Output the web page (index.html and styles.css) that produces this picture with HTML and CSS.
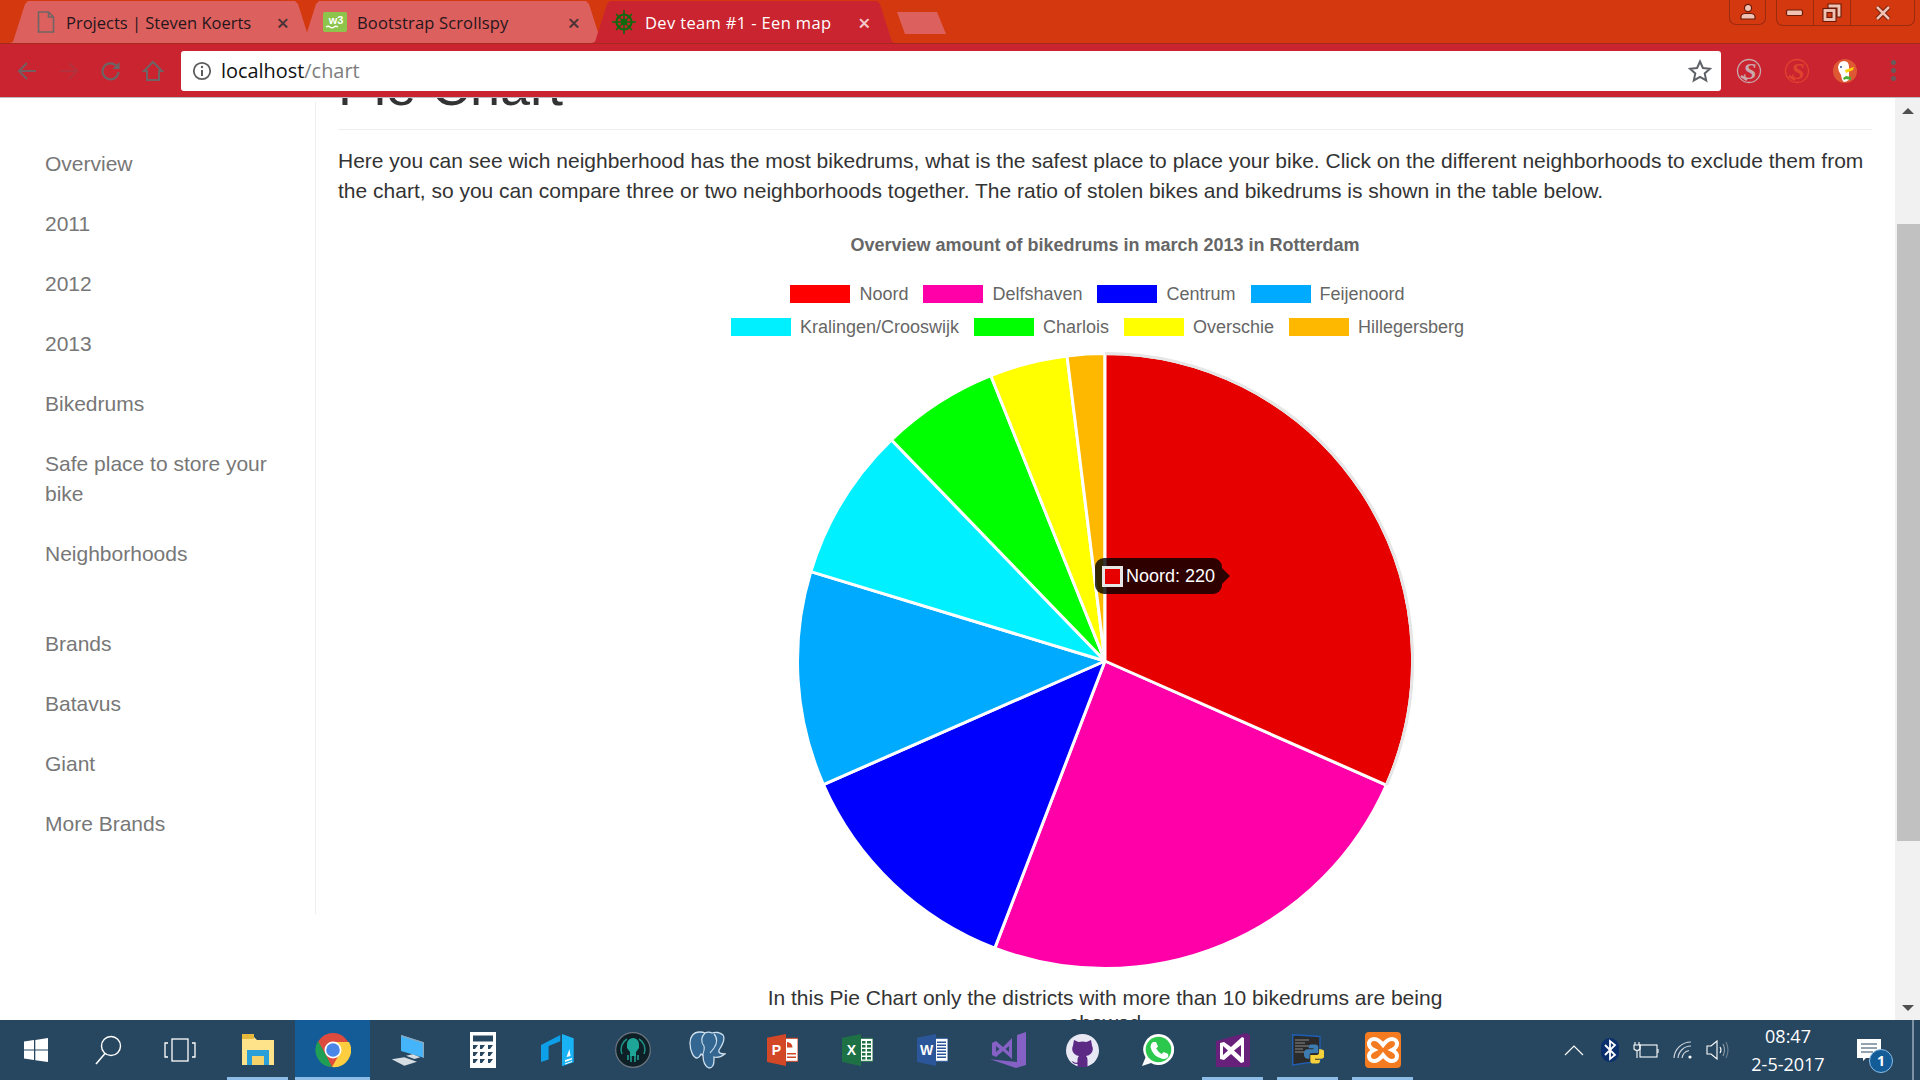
FILE: index.html
```html
<!DOCTYPE html>
<html lang="en">
<head>
<meta charset="utf-8">
<title>Dev team #1 - Een map</title>
<link rel="stylesheet" href="styles.css">
</head>
<body>
<header class="titlebar">
  <div class="tabstrip">
    <div class="tab tab-off tab-first">
      <svg class="tab-icon tab-icon-doc" viewBox="0 0 20 22"><path d="M2.500 1h10l5 5v15h-15zM12.500 1v5h5" fill="none" stroke="#6f6466" stroke-width="1.600"/></svg>
      <span class="tab-title">Projects | Steven Koerts</span>
      <span class="tab-close">×</span>
    </div>
    <div class="tab tab-off tab-second">
      <svg class="tab-icon tab-icon-w3" viewBox="0 0 24 20"><rect width="24" height="20" rx="2" fill="#8cc44c"/><text x="13" y="12" class="w3-text">w3</text><path d="M3 15q2-1.500 4 0t4 0 4 0" fill="none" stroke="#fff" stroke-width="1.300"/></svg>
      <span class="tab-title">Bootstrap Scrollspy</span>
      <span class="tab-close">×</span>
    </div>
    <div class="tab tab-on">
      <svg class="tab-icon tab-icon-wheel" viewBox="0 0 24 24"><g fill="none" stroke="#0d6a0d"><circle cx="12" cy="12" r="7.500" stroke-width="2.200"/><circle cx="12" cy="12" r="2.500" stroke-width="1.400"/><path d="M12 0v24M0 12h24M4 4l16 16M20 4L4 20" stroke-width="1.500"/></g></svg>
      <span class="tab-title">Dev team #1 - Een map</span>
      <span class="tab-close">×</span>
    </div>
    <div class="newtab"></div>
  </div>
  <div class="winctl">
    <div class="winbtn winbtn-user">
      <svg viewBox="0 0 20 18" width="20" height="18"><g fill="#f0c2b4" stroke="#6b1a08" stroke-width="1.200"><circle cx="10" cy="5" r="3.600"/><path d="M3 16v-2.500q0-2.500 4-3h6q4 .5 4 3V16z"/></g></svg>
    </div>
    <div class="wingroup">
      <div class="winbtn winbtn-min"><svg viewBox="0 0 20 10" width="20" height="10"><rect x="1.500" y="2" width="16" height="5.500" rx="1.500" fill="#f0c2b4" stroke="#6b1a08" stroke-width="1.200"/></svg></div>
      <div class="winbtn winbtn-max"><svg viewBox="0 0 20 20" width="20" height="20"><g fill="#f0c2b4" stroke="#6b1a08" stroke-width="1.100"><path d="M6 1h13v13h-4V5H6z"/><rect x="1" y="5.500" width="13" height="13"/><rect x="5" y="9.500" width="5" height="5" fill="#d4380f"/></g></svg></div>
      <div class="winbtn winbtn-close"><svg viewBox="0 0 18 16" width="18" height="16"><path d="M3 2l12 12M15 2L3 14" stroke="#6b1a08" stroke-width="4.500" fill="none"/><path d="M3 2l12 12M15 2L3 14" stroke="#f0c2b4" stroke-width="2.500" fill="none"/></svg></div>
    </div>
  </div>
</header>

<nav class="toolbar">
  <div class="navbtn"><svg viewBox="0 0 22 22" width="22" height="22"><path d="M20 11H3M11 3l-8 8 8 8" fill="none" stroke="#735f62" stroke-width="2"/></svg></div>
  <div class="navbtn"><svg viewBox="0 0 22 22" width="22" height="22"><path d="M2 11h17M11 3l8 8-8 8" fill="none" stroke="#ac3641" stroke-width="1.600"/></svg></div>
  <div class="navbtn"><svg viewBox="0 0 22 22" width="22" height="22"><path d="M18.500 12a8 8 0 1 1-2.500-6.500" fill="none" stroke="#6e6466" stroke-width="2.200"/><path d="M19.500 2v7h-7z" fill="#6e6466"/></svg></div>
  <div class="navbtn"><svg viewBox="0 0 22 22" width="22" height="22"><path d="M11 2L2 11h3v9h12v-9h3z" fill="none" stroke="#6e6466" stroke-width="2"/></svg></div>
  <div class="omnibox">
    <svg class="info" viewBox="0 0 20 20" width="20" height="20"><circle cx="10" cy="10" r="8.200" fill="none" stroke="#5c5c5c" stroke-width="1.800"/><path d="M10 9v6" stroke="#5c5c5c" stroke-width="2"/><circle cx="10" cy="6" r="1.200" fill="#5c5c5c"/></svg>
    <span class="url"><span class="url-host">localhost</span><span class="url-path">/chart</span></span>
    <svg class="star" viewBox="0 0 24 24" width="24" height="24"><path d="M12 2.500l2.900 6.500 7.100.7-5.300 4.700 1.500 7-6.200-3.600-6.200 3.600 1.500-7L2 9.700l7.100-.7z" fill="none" stroke="#5f6368" stroke-width="2"/></svg>
  </div>
  <div class="extensions">
    <div class="ext"><svg viewBox="0 0 26 26" width="26" height="26"><circle cx="13" cy="13" r="11.500" fill="none" stroke="#c9a8ac" stroke-width="1.300"/><text x="14" y="21" class="ext-s ext-s-grey">S</text><path d="M5 18l6 4" stroke="#c9a8ac" stroke-width="2.500"/></svg></div>
    <div class="ext"><svg viewBox="0 0 26 26" width="26" height="26"><circle cx="13" cy="13" r="11.500" fill="none" stroke="#e0442e" stroke-width="1.300"/><text x="14" y="21" class="ext-s ext-s-red">S</text><path d="M5 18l6 4" stroke="#e0442e" stroke-width="2.500"/></svg></div>
    <div class="ext"><svg viewBox="0 0 26 26" width="26" height="26"><circle cx="13" cy="13" r="12" fill="#de5833"/><path d="M6 9q1-6 6-6 5 0 5 6v13q-3 2-5 2-2-1-3-7-3-4-3-8z" fill="#fff"/><circle cx="9" cy="9" r="1" fill="#2d4f8e"/><path d="M13 12l9-3-1 3-7 3z" fill="#fdd20a"/><path d="M11 20l3-2 5 1v3l-5-1-2 1z" fill="#4caf35"/></svg></div>
    <div class="ext ext-menu"><i></i><i></i><i></i></div>
  </div>
</nav>

<div class="viewport">
  <div class="page">
    <aside class="sidebar">
      <ul class="side-list">
        <li><a>Overview</a></li>
        <li><a>2011</a></li>
        <li><a>2012</a></li>
        <li><a>2013</a></li>
        <li><a>Bikedrums</a></li>
        <li><a>Safe place to store your bike</a></li>
        <li><a>Neighborhoods</a></li>
      </ul>
      <ul class="side-list side-second">
        <li><a>Brands</a></li>
        <li><a>Batavus</a></li>
        <li><a>Giant</a></li>
        <li><a>More Brands</a></li>
      </ul>
    </aside>
    <main class="content">
      <h1 class="page-title">Pie Chart</h1>
      <p class="intro">Here you can see wich neighberhood has the most bikedrums, what is the safest place to place your bike. Click on the different neighborhoods to exclude them from the chart, so you can compare three or two neighborhoods together. The ratio of stolen bikes and bikedrums is shown in the table below.</p>
      <div class="chart">
        <div class="chart-title">Overview amount of bikedrums in march 2013 in Rotterdam</div>
        <div class="legend">
          <div class="legend-row">
            <span class="lg"><i class="sw sw-noord"></i>Noord</span>
            <span class="lg"><i class="sw sw-delfs"></i>Delfshaven</span>
            <span class="lg"><i class="sw sw-centrum"></i>Centrum</span>
            <span class="lg"><i class="sw sw-feij"></i>Feijenoord</span>
          </div>
          <div class="legend-row">
            <span class="lg"><i class="sw sw-kral"></i>Kralingen/Crooswijk</span>
            <span class="lg"><i class="sw sw-charl"></i>Charlois</span>
            <span class="lg"><i class="sw sw-over"></i>Overschie</span>
            <span class="lg"><i class="sw sw-hill"></i>Hillegersberg</span>
          </div>
        </div>
        <div class="pie-wrap">
          <svg class="pie" viewBox="0 0 620 620" width="620" height="620">
            <g stroke="#fff" stroke-width="3" stroke-linejoin="round">
              <path fill="#ff00a8" d="M310 310L591.400 434.100A307.500 307.500 0 0 1 199.800 597.100Z"/>
              <path fill="#0000ff" d="M310 310L199.800 597.100A307.500 307.500 0 0 1 28.400 433.600Z"/>
              <path fill="#00aaff" d="M310 310L28.400 433.600A307.500 307.500 0 0 1 15.800 220.600Z"/>
              <path fill="#00f0ff" d="M310 310L15.800 220.600A307.500 307.500 0 0 1 96.400 88.800Z"/>
              <path fill="#00ff00" d="M310 310L96.400 88.800A307.500 307.500 0 0 1 195.800 24.500Z"/>
              <path fill="#ffff00" d="M310 310L195.800 24.500A307.500 307.500 0 0 1 272 4.900Z"/>
              <path fill="#ffb800" d="M310 310L272 4.900A307.500 307.500 0 0 1 310 2.500Z"/>
              <path fill="#e60000" d="M310 310L310 2.500A307.500 307.500 0 0 1 591.400 434.100Z"/>
            </g>
            <path d="M310 2.500A307.500 307.500 0 0 1 591.400 434.100" fill="none" stroke="#e6e6e6" stroke-width="3"/>
          </svg>
          <div class="tooltip"><i class="tip-swatch"></i><span>Noord: 220</span></div>
        </div>
        <p class="chart-note">In this Pie Chart only the districts with more than 10 bikedrums are being showed</p>
      </div>
    </main>
  </div>
  <div class="scrollbar">
    <div class="sb-arrow"><i class="tri-up"></i></div>
    <div class="sb-track"><div class="sb-thumb"></div></div>
    <div class="sb-arrow"><i class="tri-down"></i></div>
  </div>
</div>

<footer class="taskbar">
  <div class="sys-btn"><svg viewBox="0 0 26 26" width="26" height="26"><path fill="#fff" d="M1 4.500l10-1.400v9.300H1zM12.300 2.900L25 1v11.400H12.300zM1 13.600h10V23L1 21.600zM12.300 13.600H25V25l-12.700-1.800z"/></svg></div>
  <div class="sys-btn"><svg viewBox="0 0 28 32" width="28" height="32"><circle cx="17" cy="12" r="9.500" fill="none" stroke="#fff" stroke-width="1.400"/><path d="M11 19.500L2 30" stroke="#fff" stroke-width="1.600"/></svg></div>
  <div class="sys-btn"><svg viewBox="0 0 32 24" width="32" height="24"><g fill="none" stroke="#fff" stroke-width="1.300"><rect x="8" y="1" width="16" height="22"/><path d="M4 5H1v14h3M28 5h3v14h-3"/></g></svg></div>
  <div class="apps">
    <div class="app app-open"><svg viewBox="0 0 34 36" width="34" height="36"><path fill="#ffe38a" d="M1 5h12l3 3h17v25H1z"/><path fill="#e6b93d" d="M1 2h12v5H1z"/><path fill="#2a9fd8" d="M6 33V18h22v15h-5v-9H11v9z"/><rect x="11" y="24" width="12" height="9" fill="#f5d36a"/></svg></div>
    <div class="app app-active">
      <svg viewBox="0 0 36 36" width="36" height="36"><circle cx="18" cy="18" r="17" fill="#dd4b3e"/><path fill="#ffcd40" d="M18 10h16a17 17 0 0 1-17 25l8-14z"/><path fill="#1f9e56" d="M3 9l8 14 6 12A17 17 0 0 1 3 9z"/><circle cx="18" cy="18" r="8.500" fill="#fff"/><circle cx="18" cy="18" r="6.800" fill="#4a86e8"/></svg>
    </div>
    <div class="app"><svg viewBox="0 0 33 31" width="33" height="31"><path fill="#45b5fb" d="M10 0l22.700 7.300v15.400L10 16z"/><path fill="none" stroke="#8fa6b8" stroke-width="1.200" d="M10 .6l22.400 7.200v15"/><path fill="#d5dde3" d="M.7 24.300l12.600-2L26 26.700l-12.700 4zM15 20.700l6.700-1.400 7.600 3-6 1.700z"/></svg></div>
    <div class="app"><svg viewBox="0 0 26 36" width="26" height="36"><rect width="26" height="36" fill="#fff"/><rect x="3" y="3.500" width="20" height="6" fill="#27465f"/><path fill="#27465f" d="M3 13h5l-3 4H3zM10 13h5l-3 4h-2zM18 13h5l-3 4h-2zM3 20h5l-3 4H3zM10 20h5l-3 4h-2zM18 20h5l-3 4h-2zM3 27h5l-3 4H3zM10 27h5l-3 4h-2zM18 27h5l-3 4h-2z"/></svg></div>
    <div class="app"><svg viewBox="0 0 33 33" width="33" height="33"><path fill="#0d9fe8" d="M0 11L19.300 1v6.300L7.600 12v13.500L0 28z"/><path fill="#18b2f5" d="M21 0l11.700 4.300v24L21 32.300z"/><path fill="#fff" d="M28.500 15l1 7-4 1zM24 26l7-2v1.500l-7 2.500zM24 29.500l7-2.500v1l-7 2.500z"/></svg></div>
    <div class="app"><svg viewBox="0 0 36 36" width="36" height="36"><circle cx="18" cy="18" r="17.300" fill="#0e1f26" stroke="#6a7580" stroke-width="1.200"/><path fill="none" stroke="#1e8f86" stroke-width="1.500" d="M7 22A12 12 0 0 1 12 7M29 22A12 12 0 0 0 24 7"/><path fill="#1fa598" d="M12 12a6 6 0 0 1 12 0v4l-3 4v4h-6v-4l-3-4z"/><path stroke="#1fa598" stroke-width="1.500" d="M13 28v-5M16 30v-6M20 30v-6M23 28v-5"/></svg></div>
    <div class="app"><svg viewBox="-1 -1 37 39" width="37" height="39"><path fill="#336791" stroke="#cfe0ee" stroke-width="1.300" d="M10 0C3 0 0 5 0 11c0 9 4 15 7 15 2 0 3-2 4-4l2 1c0 5 1 11 6 13 4 0 5-3 5-8v-3c3 1 7 0 11-3-4 0-7-1-6-4 4-6 6-12 4-15-3-3-8-3-11-2-2-1-5-1-7 0-2-1-4-1-5-1z"/><path fill="none" stroke="#cfe0ee" stroke-width="1.100" d="M15 1c-4 4-4 9-1 13 1 4-1 8-2 10M24 2c4 4 3 10 0 14l-4 5"/></svg></div>
    <div class="app"><svg viewBox="0 0 31 32" width="31" height="32"><rect x="18" y="4.300" width="13" height="23" fill="#fff" stroke="#d24726"/><path fill="#d24726" d="M20 8v5.500h5.500A5.500 5.500 0 0 0 20 8zM20 19h9v1.500h-9zM20 22.500h9V24h-9z"/><path fill="#d24726" d="M0 3.700L19 0v32L0 28z"/><text x="9.500" y="21" class="office-letter">P</text></svg></div>
    <div class="app"><svg viewBox="0 0 31 32" width="31" height="32"><rect x="18" y="4.300" width="13" height="23" fill="#fff" stroke="#1e7145"/><path fill="#1e7145" d="M20 7h3.500v2.500H20zM25 7h4v2.500h-4zM20 11h3.500v2.500H20zM25 11h4v2.500h-4zM20 15h3.500v2.500H20zM25 15h4v2.500h-4zM20 19h3.500v2.500H20zM25 19h4v2.500h-4zM20 23h3.500v2.500H20zM25 23h4v2.500h-4z"/><path fill="#1e7145" d="M0 3.700L19 0v32L0 28z"/><text x="9.500" y="21" class="office-letter">X</text></svg></div>
    <div class="app"><svg viewBox="0 0 31 32" width="31" height="32"><rect x="18" y="4.300" width="13" height="23" fill="#fff" stroke="#2b579a"/><path fill="#2b579a" d="M20 7.500h9V9h-9zM20 10.500h9V12h-9zM20 13.500h9V15h-9zM20 16.500h9V18h-9zM20 19.500h9V21h-9zM20 22.500h9V24h-9z"/><path fill="#2b579a" d="M0 3.700L19 0v32L0 28z"/><text x="9.500" y="21" class="office-letter">W</text></svg></div>
    <div class="app"><svg viewBox="0 0 36 36" width="36" height="36"><path fill="#8661c5" d="M27 3l9-3v33l-10 3L0 27.300 27 30z"/><path fill="#8661c5" fill-rule="evenodd" d="M2 11l4-2 7 6 9-9v21l-9-8-7 6-4-2zM6 14v6l3.500-3zM15.500 17l3.500 3v-6z"/></svg></div>
    <div class="app"><svg viewBox="0 0 33 33" width="33" height="33"><circle cx="16.500" cy="16.500" r="16.500" fill="#e9e9f5"/><path fill="#5c2a85" d="M8 6l4.500 2q4-1 8 0L25 6l1 5.500q2 4.500-1 8-2 2-5 2.500 1.500 1 1.500 3.500V33h-10v-3q-4 .5-6-3l2.500 1q1 1 3.500.5V25.500q0-2.500 1.500-3.500-3-.5-5-2.500-3-3.500-1-8z"/></svg></div>
    <div class="app"><svg viewBox="0 0 32 32" width="32" height="32"><path fill="#fff" d="M16.500 0a15.500 15.500 0 0 0-13 23.500L0 32l9-3A15.500 15.500 0 1 0 16.500 0z"/><circle cx="16.500" cy="15.500" r="12.800" fill="#2cc84d"/><path fill="#fff" d="M11 8l3 0 2 4.500-1.800 2q1.800 3.500 5.500 5.500l2-2 4.500 2v3q-2 2.500-5.500 2Q10.500 22.500 8.500 13q0-3.500 2.500-5z"/></svg></div>
    <div class="app app-open"><svg viewBox="0 0 34 34" width="34" height="34"><path fill="#68217a" d="M0 8L30 0l4 2v32H0z"/><path fill="#fff" fill-rule="evenodd" d="M4 10l4-1 7 5 11-10 2 1v24l-3 1-10-9-7 6-4-1zM7 13v9l5-4.500zM18 17.500l7 6.500V12z"/></svg></div>
    <div class="app app-open"><svg viewBox="0 0 32 32" width="32" height="32"><path fill="#2b2b2b" stroke="#1e5fb4" stroke-width="1.400" d="M.7.700L28 2.500V27L.7 31z"/><path stroke="#8a8a8a" d="M3 6h14M3 9h10M3 12h16M3 15h8M3 18h10"/><g transform="translate(22.300 20) scale(.8 .95)"><path fill="#3c7cb0" d="M-4-10h5q4 0 4 3v6h-8q-3 0-3 3v3h-2q-5 0-5-5t5-5h7v-1h-6v-2q0-2 3-2z"/><path fill="#f6d13c" transform="rotate(180)" d="M-4-10h5q4 0 4 3v6h-8q-3 0-3 3v3h-2q-5 0-5-5t5-5h7v-1h-6v-2q0-2 3-2z"/></g></svg></div>
    <div class="app app-open"><svg viewBox="0 0 36 36" width="36" height="36"><rect width="36" height="36" rx="4" fill="#f47b20"/><path fill="none" stroke="#fff" stroke-width="4" d="M18 13C15 9 12 7 9 7 5 7 4 10 4 12c0 3 3 5 5 6-2 1-5 3-5 6 0 3 2 5 5 5 3 0 6-2 9-6 3 4 6 6 9 6 3 0 5-2 5-5 0-3-3-5-5-6 2-1 5-3 5-6 0-2-1-5-5-5-3 0-6 2-9 6z"/></svg></div>
  </div>
  <div class="tray">
    <svg class="tray-chevron" viewBox="0 0 20 12" width="20" height="12"><path d="M1 11l9-9 9 9" fill="none" stroke="#fff" stroke-width="1.200"/></svg>
    <svg class="tray-bt" viewBox="0 0 18 24" width="18" height="24"><rect width="18" height="24" rx="9" fill="#0a2f6d"/><path d="M4 7l10 10-5 4V3l5 4L4 17" fill="none" stroke="#fff" stroke-width="1.800"/></svg>
    <svg class="tray-batt" viewBox="0 0 26 18" width="26" height="18"><g fill="none" stroke="#fff" stroke-width="1.100"><rect x="7" y="4" width="17" height="12"/><path d="M1 4h6v4q-3 3-6 0zM2 1v3M6 1v3M4 10v7"/><path d="M25 8v4"/></g></svg>
    <svg class="tray-wifi" viewBox="0 0 20 18" width="20" height="18"><g fill="none" stroke="#cdd6dd" stroke-width="1.200"><path d="M1 17A17 17 0 0 1 18 1"/><path d="M5 17A13 13 0 0 1 18 5"/><path d="M9 17A9 9 0 0 1 16 9.500"/></g><circle cx="17" cy="16" r="1.600" fill="#fff"/></svg>
    <svg class="tray-vol" viewBox="0 0 24 20" width="24" height="20"><g fill="none" stroke="#fff" stroke-width="1.100"><path d="M1 6h4l6-5v18l-6-5H1z"/><path d="M14 7q2 3 0 6"/><path d="M17 4q3 6 0 12" stroke="#8fa0ad"/><path d="M20 2q4 8 0 16" stroke="#6f8493"/></g></svg>
    <div class="clock"><span>08:47</span><span>2-5-2017</span></div>
    <div class="notify">
      <svg viewBox="0 0 26 22" width="26" height="22"><path fill="#fff" d="M0 0h24v19H9l-3 3v-3H0z"/><path stroke="#27465f" d="M4 5h16M4 9h16M4 13h12"/></svg>
      <span class="notify-badge">1</span>
    </div>
    <div class="desktop-edge"></div>
  </div>
</footer>
</body>
</html>
```

FILE: styles.css
```css
* { box-sizing: border-box; }
html, body { margin: 0; padding: 0; height: 100%; }
body {
  width: 1920px;
  height: 1080px;
  display: flex;
  flex-direction: column;
  overflow: hidden;
  font-family: "Liberation Sans", Arial, sans-serif;
  background: #fff;
}

/* ---------- browser title bar ---------- */
.titlebar {
  height: 43px;
  flex: none;
  display: flex;
  background: #d4380f;
  font-family: "Open Sans", "Noto Sans", sans-serif;
}
.tabstrip { display: flex; align-items: flex-end; padding-left: 10px; flex: 1; }
.tab {
  width: 303px;
  height: 42px;
  margin-right: -12px;
  padding: 0 24px 0 24px;
  display: flex;
  align-items: center;
  gap: 10px;
  font-size: 16.500px;
  clip-path: polygon(0 100%, 3px 97%, 15px 3px, 18px 0, 285px 0, 288px 3px, 300px 97%, 303px 100%);
}
.tab-first { padding-left: 26px; }
.tab-second .tab-title { letter-spacing: .15px; }
.tab-off { background: #dc605d; color: #26161c; }
.tab-on { background: #ca2430; color: #fff; position: relative; letter-spacing: .35px; }
.tab-icon { flex: none; }
.tab-icon-doc { width: 20px; height: 22px; }
.tab-icon-w3 { width: 24px; height: 20px; margin-left: -2px; }
.tab-icon-wheel { width: 24px; height: 24px; margin: 0 -1px 0 -4px; }
.tab-title { flex: 1; white-space: nowrap; }
.tab-close { font-size: 22px; line-height: 1; font-weight: 600; }
.tab-off .tab-close { color: #4a3236; }
.tab-on .tab-close { color: #f3c9c9; }
.w3-text { font: bold 11px "Liberation Sans", sans-serif; fill: #fff; text-anchor: middle; }
.newtab {
  width: 49px;
  height: 22px;
  margin: 0 0 9px 14px;
  background: #dc605d;
  clip-path: polygon(0 0, 40px 0, 49px 100%, 8px 100%);
}
.winctl { display: flex; align-items: flex-start; gap: 10px; padding-right: 5px; }
.winbtn { display: flex; align-items: center; justify-content: center; height: 25px; }
.winbtn-user { width: 37px; border: 1px solid #9a2a10; border-top: 0; border-radius: 0 0 7px 7px; }
.wingroup { display: flex; border: 1px solid #9a2a10; border-top: 0; border-radius: 0 0 7px 7px; }
.winbtn-min { width: 37px; border-right: 1px solid #9a2a10; }
.winbtn-max { width: 37px; border-right: 1px solid #9a2a10; }
.winbtn-close { width: 63px; }

/* ---------- toolbar ---------- */
.toolbar {
  height: 55px;
  flex: none;
  display: flex;
  align-items: center;
  padding: 0 3px 0 6px;
  background: #ca2430;
  border-top: 1px solid #a8291b;
  border-bottom: 1px solid #bdbdbd;
}
.navbtn { width: 42px; display: flex; justify-content: center; }
.omnibox {
  flex: 1;
  height: 40px;
  margin-left: 7px;
  padding: 0 9px 0 11px;
  display: flex;
  align-items: center;
  gap: 9px;
  background: #fff;
  border-radius: 3px;
  font-family: "Open Sans", "Noto Sans", sans-serif;
  font-size: 19.900px;
}
.url { flex: 1; }
.url-host { color: #111; }
.url-path { color: #7d7d7d; }
.extensions { display: flex; margin-left: 4px; }
.ext { width: 48px; display: flex; align-items: center; justify-content: center; }
.ext-menu { flex-direction: column; gap: 3px; }
.ext-menu i { width: 5px; height: 5px; border-radius: 50%; background: #6a5a5c; }
.ext-s { font: italic bold 24px "Liberation Serif", serif; text-anchor: middle; }
.ext-s-grey { fill: #c9a8ac; }
.ext-s-red { fill: #e0442e; }

/* ---------- page viewport ---------- */
.viewport { flex: 1; min-height: 0; display: flex; }
.page {
  flex: 1;
  min-width: 0;
  display: flex;
  align-items: flex-start;
  overflow: hidden;
  color: #333;
  font-size: 21px;
  line-height: 30px;
}
.sidebar {
  width: 316px;
  height: 812px;
  flex: none;
  margin-top: 4px;
  padding-top: 32px;
  border-right: 1px solid #eee;
}
.side-list { list-style: none; margin: 0; padding: 0; }
.side-second { margin-top: 30px; }
.side-list a { display: block; padding: 15px 45px; color: #777; }
.content { flex: 1; min-width: 0; padding: 0 23px 0 22px; }
.page-title {
  margin: -41px 0 0;
  padding-bottom: 13px;
  border-bottom: 1px solid #eee;
  font-size: 54px;
  font-weight: 400;
  line-height: 59px;
}
.intro { margin: 16px 0 0; }
.chart { display: flex; flex-direction: column; align-items: center; }
.chart-title { margin-top: 29px; font-size: 18px; line-height: 20px; font-weight: 700; color: #666; }
.legend {
  margin: 30px 15px 0 0;
  display: flex;
  flex-direction: column;
  gap: 15px;
  color: #666;
  font-size: 18px;
  line-height: 18px;
}
.legend-row { display: flex; justify-content: center; gap: 15px; white-space: nowrap; }
.lg { display: flex; align-items: center; gap: 9px; }
.sw { width: 60px; height: 18px; flex: none; }
.sw-noord { background: #ff0000; }
.sw-delfs { background: #ff00a8; }
.sw-centrum { background: #0000ff; }
.sw-feij { background: #00aaff; }
.sw-kral { background: #00f0ff; }
.sw-charl { background: #00ff00; }
.sw-over { background: #ffff00; }
.sw-hill { background: #ffb800; }
.pie-wrap { position: relative; margin-top: 15px; width: 620px; height: 620px; }
.pie { display: block; }
.tooltip {
  position: absolute;
  left: 300px;
  top: 207px;
  width: 127px;
  height: 36px;
  padding-left: 7px;
  display: flex;
  align-items: center;
  gap: 3px;
  background: rgba(0, 0, 0, .8);
  border-radius: 9px;
  color: #fff;
  font-size: 18px;
  line-height: 20px;
  white-space: nowrap;
}
.tooltip::after {
  content: "";
  position: absolute;
  left: 100%;
  top: 10px;
  border: 8px solid transparent;
  border-left-color: rgba(0, 0, 0, .8);
  border-right-width: 0;
}
.tip-swatch { width: 21px; height: 21px; background: #e60000; border: 3px solid #e6e6e6; flex: none; }
.chart-note { width: 690px; margin: 14px 0 0; text-align: center; line-height: 25px; }

/* ---------- scrollbar ---------- */
.scrollbar { width: 25px; flex: none; display: flex; flex-direction: column; background: #f1f1f1; }
.sb-arrow { height: 25px; flex: none; display: flex; align-items: center; justify-content: center; }
.tri-up { border: 6px solid transparent; border-top: 0; border-bottom: 6px solid #505050; }
.tri-down { border: 6px solid transparent; border-bottom: 0; border-top: 6px solid #505050; }
.sb-track { flex: 1; padding-top: 101px; padding-left: 2px; }
.sb-thumb { height: 617px; background: #c1c1c1; }

/* ---------- taskbar ---------- */
.taskbar {
  height: 60px;
  flex: none;
  display: flex;
  align-items: stretch;
  background: #27465f;
  color: #fff;
  font-family: "Open Sans", "Noto Sans", sans-serif;
}
.sys-btn { width: 72px; display: flex; align-items: center; justify-content: center; }
.apps { display: flex; margin-left: 4px; }
.app { position: relative; width: 75px; display: flex; align-items: center; justify-content: center; }
.app-open::after {
  content: "";
  position: absolute;
  left: 7px;
  right: 7px;
  bottom: 0;
  height: 3px;
  background: #8dbde6;
}
.app-active { background: #135c97; }
.app-active::after {
  content: "";
  position: absolute;
  left: 0;
  right: 0;
  bottom: 0;
  height: 3px;
  background: #8dbde6;
}
.office-letter { font: bold 14px "Liberation Sans", sans-serif; fill: #fff; text-anchor: middle; }
.tray { flex: 1; position: relative; display: flex; align-items: center; padding-left: 144px; }
.tray-chevron { margin-right: 17px; }
.tray-bt { margin-right: 14px; }
.tray-batt { margin-right: 14px; }
.tray-wifi { margin-right: 13px; }
.tray-vol { margin-right: 11px; }
.clock {
  width: 94px;
  display: flex;
  flex-direction: column;
  align-items: center;
  font-size: 18px;
  line-height: 28px;
}
.notify { position: relative; margin-left: 22px; }
.notify svg { display: block; }
.notify-badge {
  position: absolute;
  left: 12px;
  top: 10px;
  width: 24px;
  height: 24px;
  border-radius: 50%;
  background: #135c97;
  border: 1px solid #8dbde6;
  color: #fff;
  font-size: 14px;
  font-weight: 700;
  line-height: 22px;
  text-align: center;
}
.desktop-edge { position: absolute; right: 6px; top: 0; bottom: 0; width: 2px; background: #7d93a5; }
```
